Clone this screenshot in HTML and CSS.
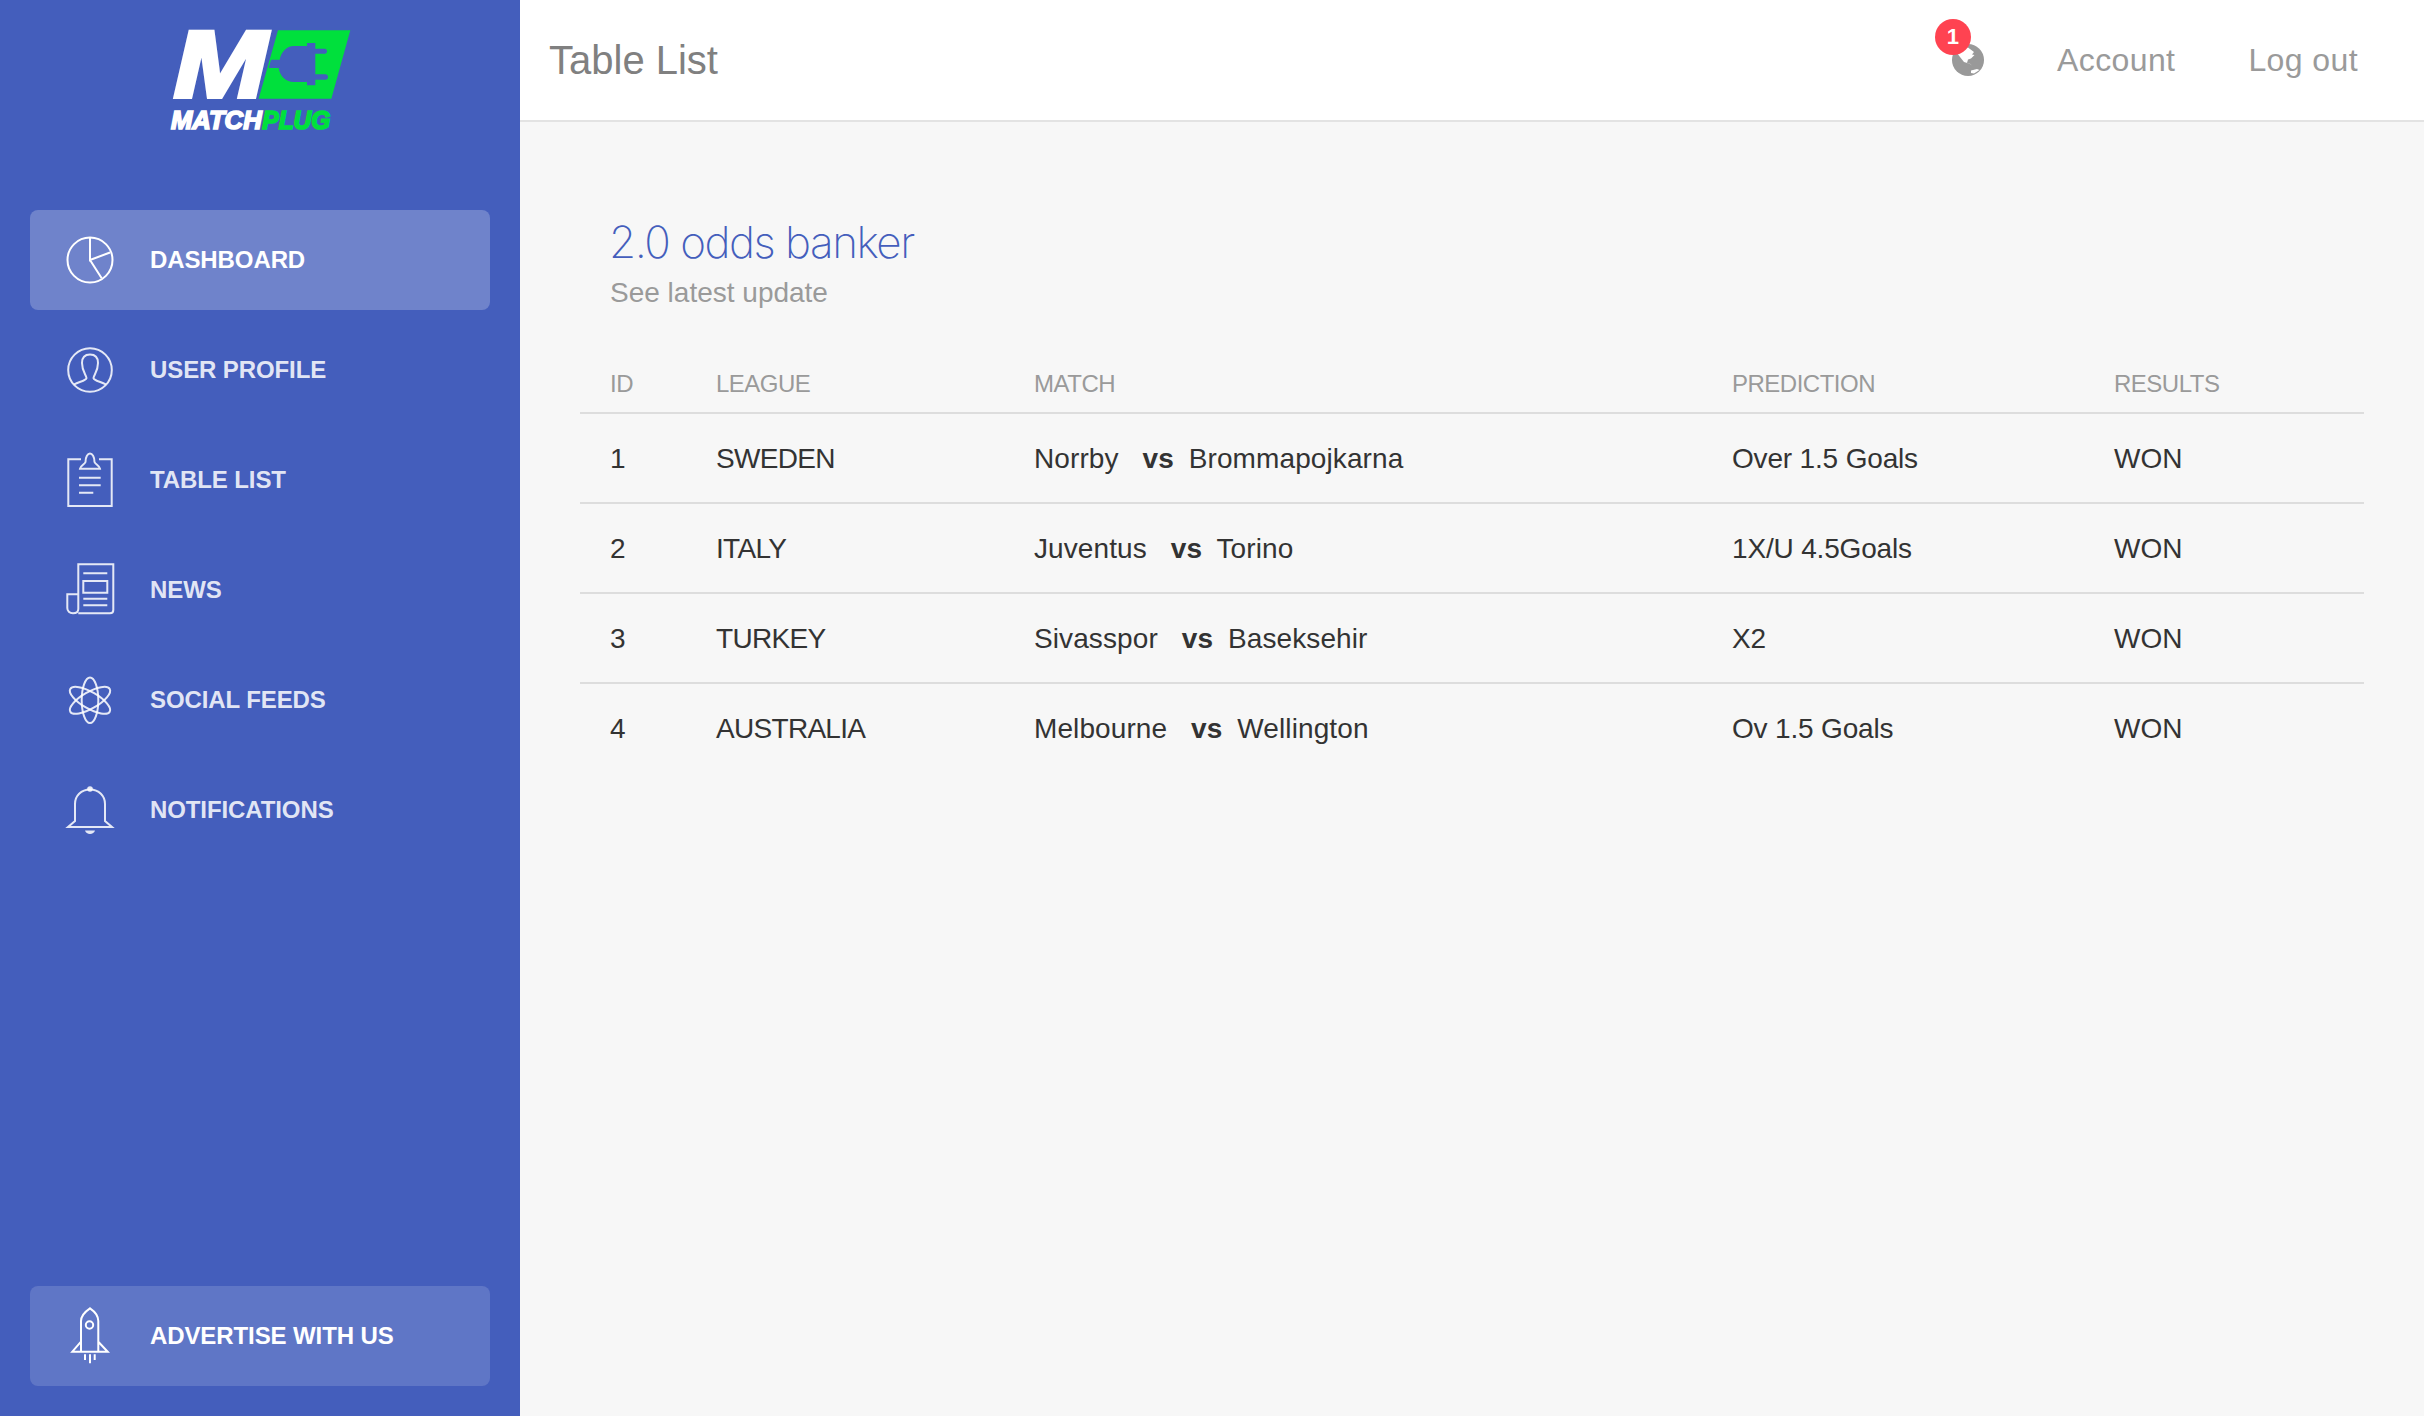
FILE: index.html
```html
<!DOCTYPE html>
<html lang="en">
<head>
    <meta charset="UTF-8">
    <title>Table List</title>
    <link rel="stylesheet" href="styles.css">
</head>
<body>
    <div class="wrapper">
        <aside class="sidebar">
            <svg class="logo" viewBox="500 80 560 320">
                <text class="logo-m" x="520" y="291" textLength="280" lengthAdjust="spacingAndGlyphs">M</text>
                <path class="logo-green" d="M833 90H1050L993 295H775Z"/>
                <path class="logo-plug" d="M880 137H920V128H945V145H975a8 8 0 0 1 0 15H945V222H975a8 8 0 0 1 0 16H945V255H920V245H880C855 245 838 225 835 203H805L812 178H838C842 155 860 137 880 137Z"/>
                <text class="logo-word" x="512" y="387" textLength="272" lengthAdjust="spacingAndGlyphs">MATCH</text>
                <text class="logo-word logo-word-green" x="786" y="387" textLength="204" lengthAdjust="spacingAndGlyphs">PLUG</text>
            </svg>
            <nav class="nav">
                <a class="nav-item active" href="#">
                    <svg class="nav-icon" viewBox="0 0 48 48"><circle cx="24" cy="24" r="22.5"/><path d="M24 1.5V24L44 16.5M24 24L35.7 42.3"/></svg>
                    DASHBOARD
                </a>
                <a class="nav-item" href="#">
                    <svg class="nav-icon" viewBox="0 0 48 48"><circle cx="24" cy="24" r="21.8"/><path d="M8 38.5C13 35.5 20 35 20.5 32C20.5 29 16 26 16 17C16 11.5 19 8.5 24 8.5C29 8.5 32 11.5 32 17C32 26 27.5 29 27.5 32C28 35 35 35.5 40 38.5"/></svg>
                    USER PROFILE
                </a>
                <a class="nav-item" href="#">
                    <svg class="nav-icon" viewBox="0 0 48 48"><path d="M15 3.3H2.3V50H45.7V3.3H33"/><path d="M14 12.7C14.5 9.5 18.5 8.5 19.5 6C19.5 -5.3 28.5 -5.3 28.5 6C29.5 8.5 33.5 9.5 34 12.7Z"/><path d="M13 21.7H34.7M13 29.3H34.7M13 36.7H27.3"/></svg>
                    TABLE LIST
                </a>
                <a class="nav-item" href="#">
                    <svg class="nav-icon" viewBox="0 0 48 48"><path d="M12.3 47.3H44C46 47.3 47.3 46 47.3 44V-1.7H12.3V43C12.3 46 10 47.3 7 47.3C3.5 47.3 1.3 45 1.3 42V28.3H12.3"/><path d="M17.3 7.3H41.3M17.3 15H41.3V26.7H17.3ZM17.3 32.7H41.3M17.3 39.3H41.3"/></svg>
                    NEWS
                </a>
                <a class="nav-item" href="#">
                    <svg class="nav-icon" viewBox="0 0 48 48"><ellipse cx="24" cy="24.3" rx="8.3" ry="22.8"/><ellipse cx="24" cy="24.3" rx="8.3" ry="22.8" transform="rotate(60 24 24.3)"/><ellipse cx="24" cy="24.3" rx="8.3" ry="22.8" transform="rotate(-60 24 24.3)"/></svg>
                    SOCIAL FEEDS
                </a>
                <a class="nav-item" href="#">
                    <svg class="nav-icon" viewBox="0 0 48 48"><path d="M2 41L9 35V18C9 10 15 3.5 24 3.5C33 3.5 39 10 39 18V35L46 41Z"/><circle class="solid" cx="24" cy="3" r="2.8"/><path class="solid" d="M19 44.5H29C28 49 20 49 19 44.5Z"/></svg>
                    NOTIFICATIONS
                </a>
            </nav>
            <a class="nav-item advertise" href="#">
                <svg class="nav-icon" viewBox="0 0 48 48"><path d="M15 39.7V9C15 3 20 -1 24 -3.7C28 -1 32.3 3 32.3 9V39.7M15 29.7L6.3 39.7H41.7L32.3 29.7"/><circle cx="23.5" cy="13" r="3.7"/><path d="M19 42.3V48M24 42.3V51.3M28.7 42.3V48"/></svg>
                ADVERTISE WITH US
            </a>
        </aside>
        <div class="main">
            <header class="topbar">
                <h2 class="page-title">Table List</h2>
                <div class="top-links">
                    <a class="globe" href="#">
                        <svg viewBox="0 0 32 32"><circle class="globe-ball" cx="16" cy="16" r="16"/><path class="globe-land" d="M6 5L16 3.5L22 8L20 10.5L22.5 11L19 14.5L16 15.5L15 19L19 20.5L21 23L18.5 20L12 18L8 13L5 9ZM19 26.5L25 25L27.5 26L22 29.5L19 29Z"/></svg>
                        <span class="badge">1</span>
                    </a>
                    <a class="top-link" href="#">Account</a>
                    <a class="top-link" href="#">Log out</a>
                </div>
            </header>
            <div class="content">
                <h4 class="card-title">2.0 odds banker</h4>
                <p class="card-sub">See latest update</p>
                <table class="table">
                    <thead>
                        <tr>
                            <th class="col-id">ID</th>
                            <th class="col-league">LEAGUE</th>
                            <th class="col-match">MATCH</th>
                            <th class="col-pred">PREDICTION</th>
                            <th>RESULTS</th>
                        </tr>
                    </thead>
                    <tbody>
                        <tr>
                            <td>1</td>
                            <td class="cell-league">SWEDEN</td>
                            <td class="cell-match">Norrby <b>vs</b> Brommapojkarna</td>
                            <td class="cell-pred">Over 1.5 Goals</td>
                            <td>WON</td>
                        </tr>
                        <tr>
                            <td>2</td>
                            <td class="cell-league">ITALY</td>
                            <td class="cell-match">Juventus <b>vs</b> Torino</td>
                            <td class="cell-pred">1X/U 4.5Goals</td>
                            <td>WON</td>
                        </tr>
                        <tr>
                            <td>3</td>
                            <td class="cell-league">TURKEY</td>
                            <td class="cell-match">Sivasspor <b>vs</b> Baseksehir</td>
                            <td class="cell-pred">X2</td>
                            <td>WON</td>
                        </tr>
                        <tr>
                            <td>4</td>
                            <td class="cell-league">AUSTRALIA</td>
                            <td class="cell-match">Melbourne <b>vs</b> Wellington</td>
                            <td class="cell-pred">Ov 1.5 Goals</td>
                            <td>WON</td>
                        </tr>
                    </tbody>
                </table>
            </div>
        </div>
    </div>
</body>
</html>
```

FILE: styles.css
```css
* {
    margin: 0;
    padding: 0;
    box-sizing: border-box;
}

body {
    font-family: "Liberation Sans", Arial, sans-serif;
    background: #f7f7f7;
    color: #333;
}

a {
    text-decoration: none;
    color: inherit;
}

.wrapper {
    display: flex;
    height: 1416px;
    overflow: hidden;
}

.sidebar {
    width: 520px;
    flex-shrink: 0;
    background: #445ebc;
    display: flex;
    flex-direction: column;
    align-items: center;
    padding: 27px 30px 30px;
}

.logo {
    width: 186.67px;
    height: 106.67px;
    flex-shrink: 0;
    overflow: visible;
}

.logo-m {
    font-weight: bold;
    font-style: italic;
    font-size: 286px;
    fill: #fff;
    stroke: #fff;
    stroke-width: 12px;
}

.logo-green {
    fill: #00e03c;
}

.logo-plug {
    fill: #445ebc;
}

.logo-word {
    font-weight: bold;
    font-style: italic;
    font-size: 75px;
    fill: #fff;
    stroke: #fff;
    stroke-width: 5px;
}

.logo-word-green {
    fill: #00e03c;
    stroke: #00e03c;
}

.nav {
    width: 100%;
    margin-top: 76px;
    display: flex;
    flex-direction: column;
    gap: 10px;
}

.nav-item {
    width: 100%;
    height: 100px;
    flex-shrink: 0;
    display: flex;
    align-items: center;
    gap: 36px;
    padding-left: 36px;
    border-radius: 8px;
    font-size: 24px;
    font-weight: bold;
    letter-spacing: -0.1px;
    color: rgba(255, 255, 255, 0.86);
}

.nav-item.active {
    background: rgba(255, 255, 255, 0.23);
    color: #fff;
}

.nav-item.advertise {
    margin-top: auto;
    background: rgba(255, 255, 255, 0.15);
    color: #fff;
}

.nav-icon {
    width: 48px;
    height: 48px;
    flex-shrink: 0;
    overflow: visible;
    fill: none;
    stroke: currentColor;
    stroke-width: 2px;
}

.nav-icon .solid {
    fill: currentColor;
    stroke: none;
}

.main {
    flex: 1;
    min-width: 0;
}

.topbar {
    height: 122px;
    background: #fff;
    border-bottom: 2px solid #e3e3e3;
    display: flex;
    align-items: center;
    justify-content: space-between;
    padding: 0 66px 0 29px;
}

.page-title {
    font-size: 40px;
    font-weight: normal;
    color: #808080;
}

.top-links {
    display: flex;
    align-items: center;
    gap: 73px;
}

.top-link {
    font-size: 32px;
    letter-spacing: 0.4px;
    color: #9a9a9a;
}

.globe {
    position: relative;
    width: 32px;
    height: 32px;
}

.globe svg {
    display: block;
    width: 32px;
    height: 32px;
}

.globe-ball {
    fill: #999;
}

.globe-land {
    fill: #fff;
}

.badge {
    position: absolute;
    left: -17px;
    top: -25px;
    width: 36px;
    height: 36px;
    border-radius: 50%;
    background: #ff4351;
    color: #fff;
    font-size: 22px;
    font-weight: bold;
    line-height: 36px;
    text-align: center;
}

.content {
    padding: 95px 60px 0;
}

.card-title {
    font-family: Inter, "Liberation Sans", sans-serif;
    font-size: 44px;
    font-weight: 200;
    letter-spacing: -1.5px;
    line-height: 50px;
    color: #445ebc;
    padding-left: 29px;
    margin-bottom: 9px;
}

.card-sub {
    font-size: 28px;
    line-height: 34px;
    color: #9a9a9a;
    padding-left: 30px;
    margin-bottom: 39px;
}

.table {
    width: 100%;
    table-layout: fixed;
    border-collapse: collapse;
}

.table th {
    height: 64px;
    font-size: 24px;
    font-weight: normal;
    text-align: left;
    letter-spacing: -0.5px;
    color: #9a9a9a;
    padding: 6px 0 0 30px;
    border-bottom: 2px solid #ddd;
}

.table td {
    height: 90px;
    font-size: 28px;
    padding: 1px 0 0 30px;
    border-bottom: 2px solid #ddd;
}

.table tbody tr:last-child td {
    border-bottom: none;
}

.table b {
    margin: 0 7px 0 16px;
}

.cell-league {
    letter-spacing: -0.7px;
}

.cell-match {
    letter-spacing: 0.1px;
}

.cell-pred {
    letter-spacing: -0.17px;
}

.col-id {
    width: 106px;
}

.col-league {
    width: 318px;
}

.col-match {
    width: 698px;
}

.col-pred {
    width: 382px;
}
```
